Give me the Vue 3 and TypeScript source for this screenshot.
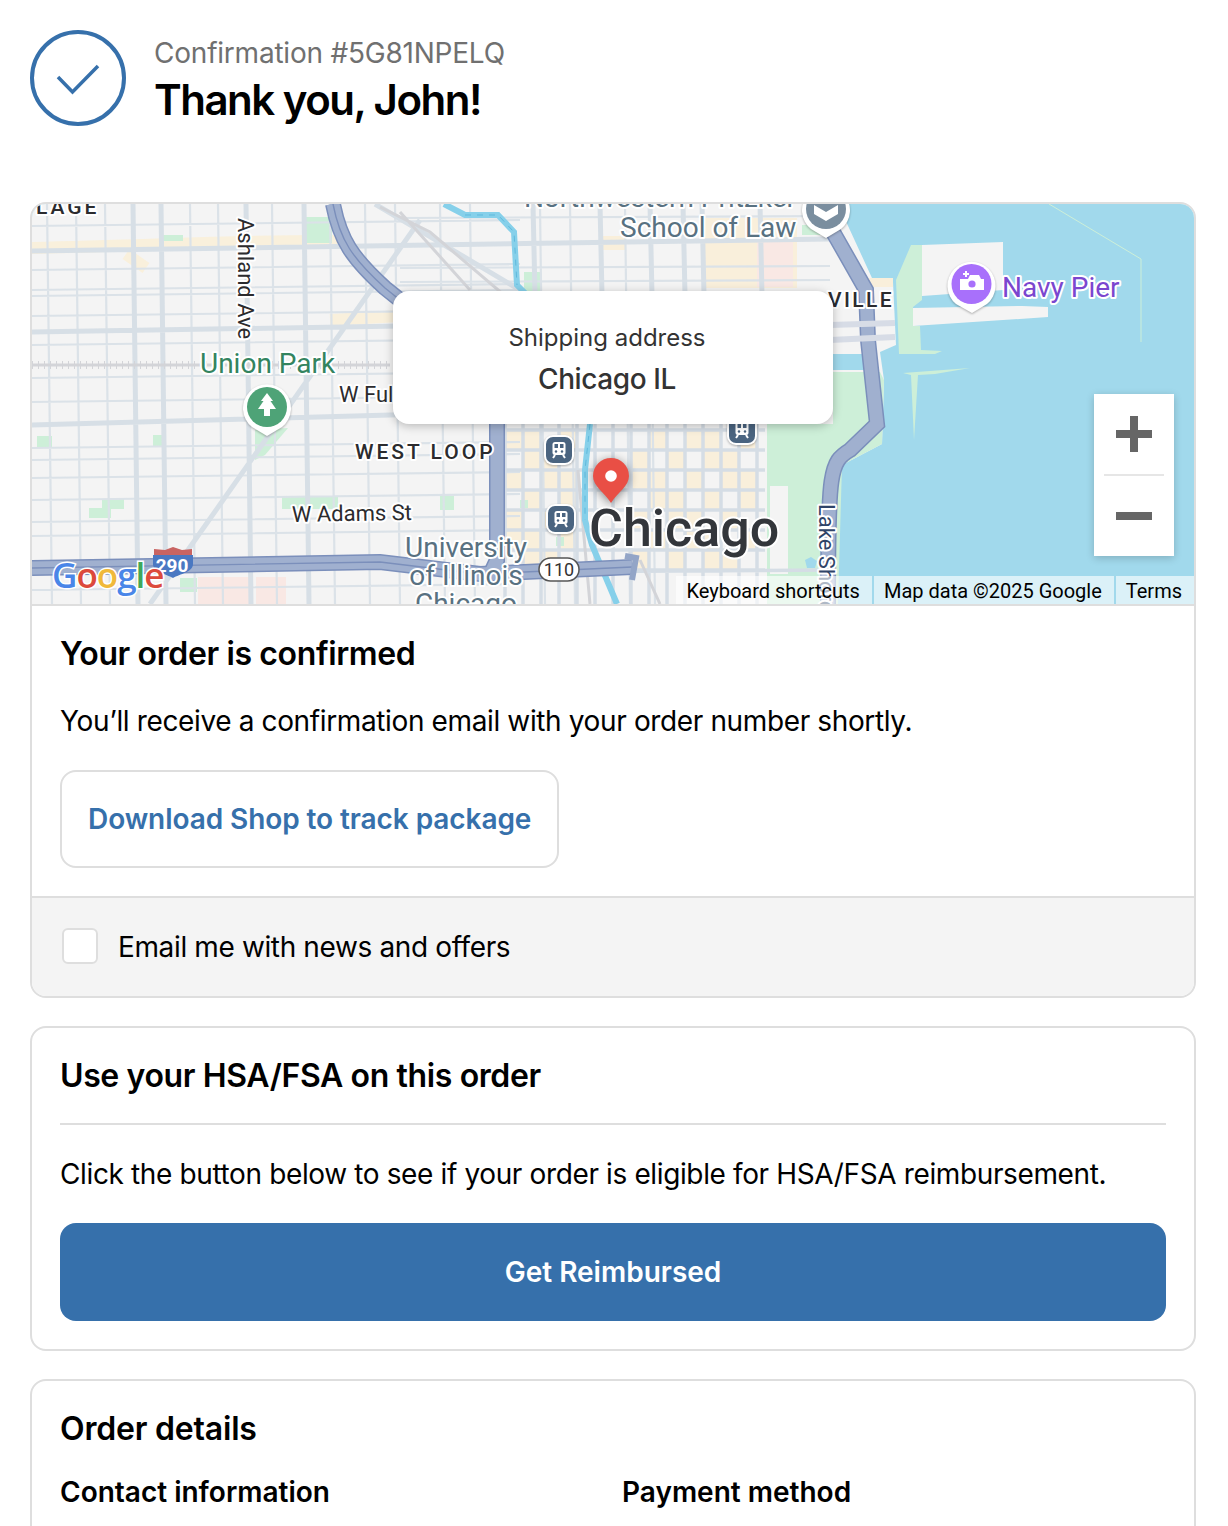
<script setup lang="ts">
type Seg = [number, number, number, number];

const toPath = (segs: Seg[]) =>
  segs.map(([a, b, c, d]) => `M${a} ${b}L${c} ${d}`).join("");

// west side and north side street grid
const minorSegs: Seg[] = [
  ...[47, 76, 105, 190, 218, 272, 330, 365, 395, 440, 470, 540, 570, 625, 650].map(
    (x): Seg => [x, 204, x + 5, 604]
  ),
  ...[226, 270, 290, 296, 316, 345, 378, 402, 448, 460, 478, 500, 522, 536, 590].map(
    (y): Seg => [32, y, 520, y - 6]
  ),
  ...[218, 268, 282].map((y): Seg => [400, y, 830, y - 2]),
];

const majorSegs: Seg[] = [
  ...[133, 161, 246, 304].map((x): Seg => [x, 204, x + 5, 604]),
  ...[533, 600, 650, 683, 702, 760].map((x): Seg => [x, 204, x + 2, 295]),
  [32, 251, 830, 239],
  [32, 332, 400, 326],
  [32, 425, 500, 412],
  [420, 220, 150, 604],
  [375, 204, 520, 290],
];

// downtown blocks, 18 x 20 px
const gridV = Array.from({ length: 15 }, (_, i) => 505 + i * 18);
const gridH = Array.from({ length: 8 }, (_, i) => 430 + i * 20);
const gridSegs: Seg[] = [
  ...gridV.map((x): Seg => [x, 424, x, 604]),
  ...gridH.map((y): Seg => [505, y, 765, y]),
  [505, 572, 830, 570],
];

const warmBlocks: number[][] = [];
gridV.slice(0, -1).forEach((x, i) => {
  gridH.slice(0, -1).forEach((y, j) => {
    const central = x > 560 && x < 620;
    if (!central && (i * 7 + j * 13) % 5 < 3) warmBlocks.push([x, y, 18, 20]);
  });
});
warmBlocks.push([703, 218, 94, 70], [600, 236, 26, 14], [866, 278, 27, 9]);

const parks = [
  [305, 217, 27, 26],
  [163, 235, 20, 6],
  [37, 436, 15, 12],
  [153, 435, 13, 12],
  [89, 508, 22, 10],
  [102, 499, 22, 10],
  [282, 497, 56, 12],
  [440, 496, 14, 14],
  [520, 500, 8, 8],
  [556, 537, 8, 9],
  [180, 578, 17, 14],
  [524, 272, 16, 20],
  [802, 225, 24, 10],
];

const tiles = [
  [198, 577, 55, 27],
  [256, 577, 30, 27],
  [757, 240, 36, 47],
];
</script>

<template>
  <div class="page">
    <header class="head">
      <svg class="check" viewBox="0 0 96 96">
        <circle class="check__ring" cx="48" cy="48" r="46" />
        <path class="check__tick" d="M28 47L42.5 62L68 36" />
      </svg>
      <div class="head__text">
        <div class="head__sub">Confirmation #5G81NPELQ</div>
        <h1 class="head__title">Thank you, John!</h1>
      </div>
    </header>

    <section class="card">
      <div class="map">
        <svg class="map__art" viewBox="32 204 1162 400">
          <rect class="water" x="32" y="204" width="1162" height="400" />
          <path
            class="land"
            d="M32 204H838L872 278L893 282L896 345L880 352L884 380L882 444L842 465L839 500L834 604H32Z"
          />
          <rect class="water" x="833" y="354" width="34" height="16" />
          <path
            class="park"
            d="M833 372H880L884 380L882 444L842 465L838 604H767V424H833Z"
          />
          <path
            class="park"
            d="M911 245H922V300L913 307V326H920L921 350L942 351L935 354H899L896 280Z"
          />
          <path class="land" d="M922 245L1003 242V290L936 295L922 296ZM913 308L1022 306L1048 307V317L913 326Z" />
          <rect class="land" x="770" y="486" width="18" height="88" />
          <path class="lake-line" d="M1049 204L1141 259V342" />
          <path class="park" d="M903 373L970 368L935 374L918 375L914 440L911 375Z" />
          <path class="water" d="M805 560L811 557L817 561L815 568H807Z" />

          <rect v-for="(b, i) in warmBlocks" :key="'w' + i" class="warm" :x="b[0]" :y="b[1]" :width="b[2]" :height="b[3]" />
          <rect v-for="(b, i) in tiles" :key="'t' + i" class="pink" :x="b[0]" :y="b[1]" :width="b[2]" :height="b[3]" />
          <path class="warm-band" d="M32 248C150 246 240 240 340 241M126 254L146 268M330 320L400 316" />
          <rect v-for="(b, i) in parks" :key="'p' + i" class="green" :x="b[0]" :y="b[1]" :width="b[2]" :height="b[3]" />
          <path class="green" d="M255 430L288 428L265 455L255 460Z" />

          <path class="road-minor" :d="toPath(minorSegs)" />
          <path class="road-major" :d="toPath(majorSegs)" />
          <path class="road-grid" :d="toPath(gridSegs)" />
          <path class="rail" d="M32 365H390M380 207L430 232L510 300M400 212L470 290M578 470L590 604M640 560L660 604" />
          <path class="rail-tick" d="M32 365H390" />

          <path class="river" d="M444 204L465 215H498L514 232L517 285L532 300" />
          <path class="river" d="M590 424L585 470L585 520L592 545L617 604" />
          <path class="river-dash" d="M465 215H498L514 232L517 285" />
          <path class="river-dash" d="M590 424L585 470L585 520" />

          <g class="hwy">
            <path d="M333 204C340 240 352 258 385 288L430 324" />
            <path d="M497 424V560L490 575" />
            <path d="M32 568L380 562L480 574L632 567" />
            <path d="M829 225L866 290L868 340L877 424L850 450C830 462 828 470 828 604" />
          </g>
          <g class="hwy-fill">
            <path d="M333 204C340 240 352 258 385 288L430 324" />
            <path d="M497 424V560L490 575" />
            <path d="M32 568L380 562L480 574L632 567" />
            <path d="M829 225L866 290L868 340L877 424L850 450C830 462 828 470 828 604" />
          </g>
          <g class="hwy-center">
            <path d="M333 204C340 240 352 258 385 288L430 324" />
            <path d="M32 568L380 562L480 574L632 567" />
          </g>
          <path class="ramp" d="M625 556L636 558L632 580" />
          <path class="ramp-cross" d="M830 325L895 323M830 340L895 337" />

          <text class="lbl lbl--hood" x="36" y="214">LAGE</text>
          <text class="lbl" transform="translate(238 218) rotate(90)">Ashland Ave</text>
          <text class="lbl lbl--park" x="200" y="373">Union Park</text>
          <text class="lbl" x="339" y="402">W Fulton St</text>
          <text class="lbl lbl--hood" x="355" y="459">WEST LOOP</text>
          <text class="lbl" transform="translate(292 522) rotate(-1)">W Adams St</text>
          <text class="lbl lbl--poi" x="466" y="557" text-anchor="middle">University</text>
          <text class="lbl lbl--poi" x="466" y="585" text-anchor="middle">of Illinois</text>
          <text class="lbl lbl--poi" x="466" y="613" text-anchor="middle">Chicago</text>
          <text class="lbl lbl--poi" x="660" y="207" text-anchor="middle">Northwestern Pritzker</text>
          <text class="lbl lbl--poi" x="620" y="237">School of Law</text>
          <text class="lbl lbl--hood lbl--ville" x="828" y="307">VILLE</text>
          <text class="lbl lbl--pier" x="1002" y="297">Navy Pier</text>
          <text class="lbl lbl--road" transform="translate(819 504) rotate(90)">Lake Shore Dr</text>
          <text class="lbl lbl--city" x="589" y="546">Chicago</text>

          <!-- highway shields -->
          <g>
            <rect class="badge-110" x="539" y="558" width="40" height="23" rx="11.5" />
            <text class="badge-110__text" x="559" y="576">110</text>
          </g>

          <path class="shield-red" d="M154 555V549L165 550L173 547L182 550L192 549V555Z" />
          <path class="shield-blue" d="M153 555H193V564C193 572 180 574 173 578C166 574 153 572 153 564Z" />
          <text class="shield-text" x="172" y="572">290</text>
          <text class="google" x="52" y="588"
            ><tspan class="g-blue">G</tspan><tspan class="g-red">o</tspan><tspan class="g-yellow">o</tspan
            ><tspan class="g-blue">g</tspan><tspan class="g-green">l</tspan><tspan class="g-red">e</tspan></text
          >

          <!-- places -->
          <g class="pin">
            <path class="pin__back" d="M267 436L252 427A24 24 0 1 1 282 427Z" />
            <circle class="pin__park" cx="267" cy="407" r="20" />
            <path class="pin__glyph" d="M267 393L273 401H270.5L276 409H270V416H264V409H258L263.5 401H261Z" />
          </g>
          <g class="pin">
            <path class="pin__back" d="M826 238L811 229A24 24 0 1 1 841 229Z" />
            <circle class="pin__law" cx="826" cy="209" r="20" />
            <path class="pin__glyph" d="M814 205L826 212L838 205V214L826 221L814 214Z" />
          </g>
          <g class="pin">
            <path class="pin__back" d="M972 313L956 304A24 24 0 1 1 987 304Z" />
            <circle class="pin__pier" cx="971.5" cy="284" r="20" />
            <path class="pin__glyph" d="M960 279H968L970 275H979L981 279H984V290H960Z" />
            <circle class="pin__pier" cx="972" cy="284" r="3.6" />
            <path class="pin__plus" d="M963 274H969M966 271V277" />
          </g>

          <g v-for="(t, i) in [[559, 450], [561, 519], [742, 430]]" :key="'s' + i" class="pin">
            <rect class="stop__back" :x="t[0] - 15" :y="t[1] - 15" width="30" height="30" rx="9" />
            <rect class="stop" :x="t[0] - 13" :y="t[1] - 13" width="26" height="26" rx="7" />
            <rect class="stop__train" :x="t[0] - 6.5" :y="t[1] - 8" width="13" height="13" rx="2.5" />
            <rect class="stop" :x="t[0] - 4.5" :y="t[1] - 6" width="3.5" height="4" />
            <rect class="stop" :x="t[0] + 1" :y="t[1] - 6" width="3.5" height="4" />
            <circle class="stop" :cx="t[0] - 3" :cy="t[1] + 1.5" r="1.2" />
            <circle class="stop" :cx="t[0] + 3" :cy="t[1] + 1.5" r="1.2" />
            <path class="stop__legs" :d="`M${t[0] - 4} ${t[1] + 5}L${t[0] - 6} ${t[1] + 8}M${t[0] + 4} ${t[1] + 5}L${t[0] + 6} ${t[1] + 8}`" />
          </g>

          <g class="marker">
            <path class="marker__body" d="M611 503C604 492 593 486 593 476A18 18 0 0 1 629 476C629 486 618 492 611 503Z" />
            <circle class="marker__dot" cx="611" cy="476" r="5.8" />
          </g>
        </svg>

        <div class="map__credits">
          <span class="map__credit">Keyboard shortcuts</span>
          <span class="map__credit">Map data ©2025 Google</span>
          <span class="map__credit">Terms</span>
        </div>

        <div class="zoom">
          <div class="zoom__btn">
            <span class="zoom__bar"></span>
            <span class="zoom__bar zoom__bar--v"></span>
          </div>
          <div class="zoom__line"></div>
          <div class="zoom__btn">
            <span class="zoom__bar"></span>
          </div>
        </div>

        <div class="popup">
          <div class="popup__label">Shipping address</div>
          <div class="popup__city">Chicago IL</div>
        </div>
      </div>

      <div class="card__body">
        <h2 class="title">Your order is confirmed</h2>
        <p class="copy copy--first">You’ll receive a confirmation email with your order number shortly.</p>
        <a class="btn-outline">Download Shop to track package</a>
      </div>
      <label class="news">
        <span class="news__box"></span>
        <span class="copy">Email me with news and offers</span>
      </label>
    </section>

    <section class="card card--pad">
      <h2 class="title">Use your HSA/FSA on this order</h2>
      <hr class="rule" />
      <p class="copy">Click the button below to see if your order is eligible for HSA/FSA reimbursement.</p>
      <a class="btn-solid">Get Reimbursed</a>
    </section>

    <section class="card card--pad card--last">
      <h2 class="title title--wide">Order details</h2>
      <div class="details">
        <div class="details__head">Contact information</div>
        <div class="details__head">Payment method</div>
      </div>
    </section>
  </div>
</template>

<style>
html,
body {
  background: #fff;
}
</style>

<style scoped>
.page {
  box-sizing: border-box;
  height: 1526px;
  overflow: hidden;
  padding: 30px 32px 0 30px;
  font-family: Inter, "Liberation Sans", sans-serif;
  color: #000;
}

.head {
  display: flex;
  align-items: center;
  gap: 28px;
  margin-bottom: 76px;
}

.check {
  width: 96px;
  height: 96px;
  flex: none;
}

.check__ring {
  fill: none;
  stroke: #3670ab;
  stroke-width: 4;
}

.check__tick {
  fill: none;
  stroke: #3670ab;
  stroke-width: 3.5;
}

.head__text {
  padding-top: 3px;
}

.head__sub {
  font-size: 28px;
  line-height: 40px;
  letter-spacing: -0.22px;
  color: #707070;
}

.head__title {
  margin: 1px 0 0;
  font-size: 42px;
  line-height: 52px;
  font-weight: 600;
  letter-spacing: -1.5px;
}

.card {
  border: 2px solid #dedede;
  border-radius: 16px;
  overflow: hidden;
  margin-bottom: 28px;
}

.card--pad {
  padding: 30px 28px 28px;
}

.card--last {
  height: 300px;
}

.map {
  position: relative;
  height: 400px;
  border-bottom: 2px solid #dedede;
  overflow: hidden;
}

.map__art {
  display: block;
  width: 100%;
  height: 400px;
}

.water {
  fill: #a1d9ec;
}

.land {
  fill: #f4f4f4;
}

.park,
.green {
  fill: #cdefd8;
}

.warm {
  fill: #f9efdb;
}

.pink {
  fill: #f9e8e4;
}

.warm-band {
  fill: none;
  stroke: #f9f0dc;
  stroke-width: 12;
}

.lake-line {
  fill: none;
  stroke: #cdefd8;
  stroke-width: 1;
}

.road-minor {
  fill: none;
  stroke: #dbe2e8;
  stroke-width: 2.2;
}

.road-major {
  fill: none;
  stroke: #d7dfe6;
  stroke-width: 5;
}

.road-grid {
  fill: none;
  stroke: #d5dde5;
  stroke-width: 3.5;
}

.rail {
  fill: none;
  stroke: #d3d4d8;
  stroke-width: 3;
}

.rail-tick {
  fill: none;
  stroke: #d3d4d8;
  stroke-width: 8;
  stroke-dasharray: 1 5;
}

.river {
  fill: none;
  stroke: #86d0ea;
  stroke-width: 6;
}

.river-dash {
  fill: none;
  stroke: #5fb9dc;
  stroke-width: 1;
  stroke-dasharray: 6 6;
}

.hwy path {
  fill: none;
  stroke: #7b8fbb;
  stroke-width: 16;
}

.hwy-fill path {
  fill: none;
  stroke: #a0b0cf;
  stroke-width: 13;
}

.hwy-center path {
  fill: none;
  stroke: #7b8fbb;
  stroke-width: 1.4;
}

.ramp {
  fill: none;
  stroke: #93a5c7;
  stroke-width: 6;
}

.ramp-cross {
  fill: none;
  stroke: #d7dce6;
  stroke-width: 6;
}

.lbl {
  font-family: Roboto, "Liberation Sans", sans-serif;
  font-size: 22px;
  fill: #2b2b2e;
  stroke: #fff;
  stroke-width: 4px;
  stroke-linejoin: round;
  paint-order: stroke;
}

.lbl--hood {
  font-size: 21px;
  font-weight: 500;
  letter-spacing: 3px;
}

.lbl--ville {
  letter-spacing: 2.4px;
}

.lbl--park {
  font-size: 28px;
  fill: #33845f;
}

.lbl--poi {
  font-size: 28px;
  fill: #587181;
}

.lbl--pier {
  font-size: 28px;
  fill: #7b46cf;
}

.lbl--road {
  fill: #2f4468;
}

.lbl--city {
  font-size: 52px;
  font-weight: 500;
  fill: #33363b;
}

.badge-110 {
  fill: #fff;
  stroke: #555;
  stroke-width: 1.5;
}

.badge-110__text {
  font-family: Roboto, "Liberation Sans", sans-serif;
  font-size: 18px;
  fill: #333;
  text-anchor: middle;
}

.shield-red {
  fill: #c96462;
}

.shield-blue {
  fill: #4a78c2;
}

.shield-text {
  font-family: Roboto, "Liberation Sans", sans-serif;
  font-size: 19px;
  font-weight: 700;
  fill: #fff;
  text-anchor: middle;
}

.pin {
  filter: drop-shadow(0 1px 1px rgba(0, 0, 0, 0.3));
}

.pin__back {
  fill: #fff;
}

.pin__park {
  fill: #4ea377;
}

.pin__law {
  fill: #7a8e9f;
}

.pin__pier {
  fill: #a870fb;
}

.pin__glyph {
  fill: #fff;
}

.pin__plus {
  fill: none;
  stroke: #fff;
  stroke-width: 2;
}

.stop__back {
  fill: #fff;
}

.stop {
  fill: #4a6480;
}

.stop__train {
  fill: #fff;
}

.stop__legs {
  fill: none;
  stroke: #fff;
  stroke-width: 2;
}

.marker {
  filter: drop-shadow(0 2px 5px rgba(0, 0, 0, 0.45));
}

.marker__body {
  fill: #e94f45;
}

.marker__dot {
  fill: #fff;
}

.google {
  font-family: "Open Sans", Roboto, sans-serif;
  font-size: 35px;
  font-weight: 600;
  letter-spacing: -1px;
  stroke: #fff;
  stroke-width: 3px;
  paint-order: stroke;
}

.g-blue {
  fill: #4a86e8;
}

.g-red {
  fill: #dc4a3c;
}

.g-yellow {
  fill: #f0b93a;
}

.g-green {
  fill: #3ea85a;
}

.map__credits {
  position: absolute;
  right: 0;
  bottom: 0;
  display: flex;
  gap: 2px;
  height: 28px;
  font-family: Roboto, "Liberation Sans", sans-serif;
  font-size: 20px;
  line-height: 30px;
  color: #000;
}

.map__credit {
  background: rgba(255, 255, 255, 0.62);
  padding: 0 12px 0 10px;
  white-space: nowrap;
}

.zoom {
  position: absolute;
  top: 190px;
  right: 20px;
  width: 80px;
  height: 162px;
  background: #fff;
  box-shadow: 0 2px 8px rgba(0, 0, 0, 0.2);
}

.zoom__btn {
  position: relative;
  height: 80px;
}

.zoom__bar {
  position: absolute;
  left: 22px;
  top: 36px;
  width: 36px;
  height: 8px;
  background: #666;
}

.zoom__bar--v {
  left: 36px;
  top: 22px;
  width: 8px;
  height: 36px;
}

.zoom__line {
  height: 2px;
  margin: 0 10px;
  background: #e6e6e6;
}

.popup {
  position: absolute;
  left: 361px;
  top: 87px;
  width: 440px;
  height: 133px;
  box-sizing: border-box;
  padding: 30px 12px 0 0;
  background: #fff;
  border-radius: 16px;
  box-shadow: 0 2px 10px rgba(0, 0, 0, 0.25);
  text-align: center;
  color: #333;
}

.popup__label {
  font-size: 24px;
  line-height: 34px;
}

.popup__city {
  margin-top: 5px;
  font-size: 28px;
  line-height: 38px;
  font-weight: 500;
  letter-spacing: -0.4px;
}

.card__body {
  padding: 30px 28px 28px;
}

.title {
  margin: 0;
  font-size: 32px;
  line-height: 36px;
  font-weight: 600;
  letter-spacing: -0.38px;
}

.title--wide {
  letter-spacing: -0.2px;
}

.copy {
  margin: 0;
  font-size: 28px;
  line-height: 34px;
  letter-spacing: -0.37px;
}

.copy--first {
  margin-top: 32px;
}

.btn-outline {
  display: inline-flex;
  align-items: center;
  box-sizing: border-box;
  height: 98px;
  margin-top: 32px;
  padding: 0 26px;
  border: 2px solid #dedede;
  border-radius: 16px;
  font-size: 28px;
  font-weight: 600;
  letter-spacing: -0.08px;
  color: #3670ab;
}

.news {
  display: flex;
  align-items: center;
  gap: 20px;
  height: 98px;
  padding-left: 30px;
  background: #f4f4f4;
  border-top: 2px solid #dedede;
}

.news__box {
  box-sizing: border-box;
  width: 36px;
  height: 36px;
  margin-top: -2px;
  background: #fff;
  border: 2px solid #dedede;
  border-radius: 6px;
}

.rule {
  height: 2px;
  margin: 29px 0 32px;
  border: 0;
  background: #dedede;
}

.btn-solid {
  display: flex;
  align-items: center;
  justify-content: center;
  height: 98px;
  margin-top: 32px;
  background: #3670ab;
  border-radius: 16px;
  font-size: 28px;
  font-weight: 600;
  color: #fff;
}

.details {
  display: grid;
  grid-template-columns: 1fr 1fr;
  gap: 18px;
  margin-top: 28px;
}

.details__head {
  font-size: 28px;
  line-height: 34px;
  font-weight: 600;
}
</style>
